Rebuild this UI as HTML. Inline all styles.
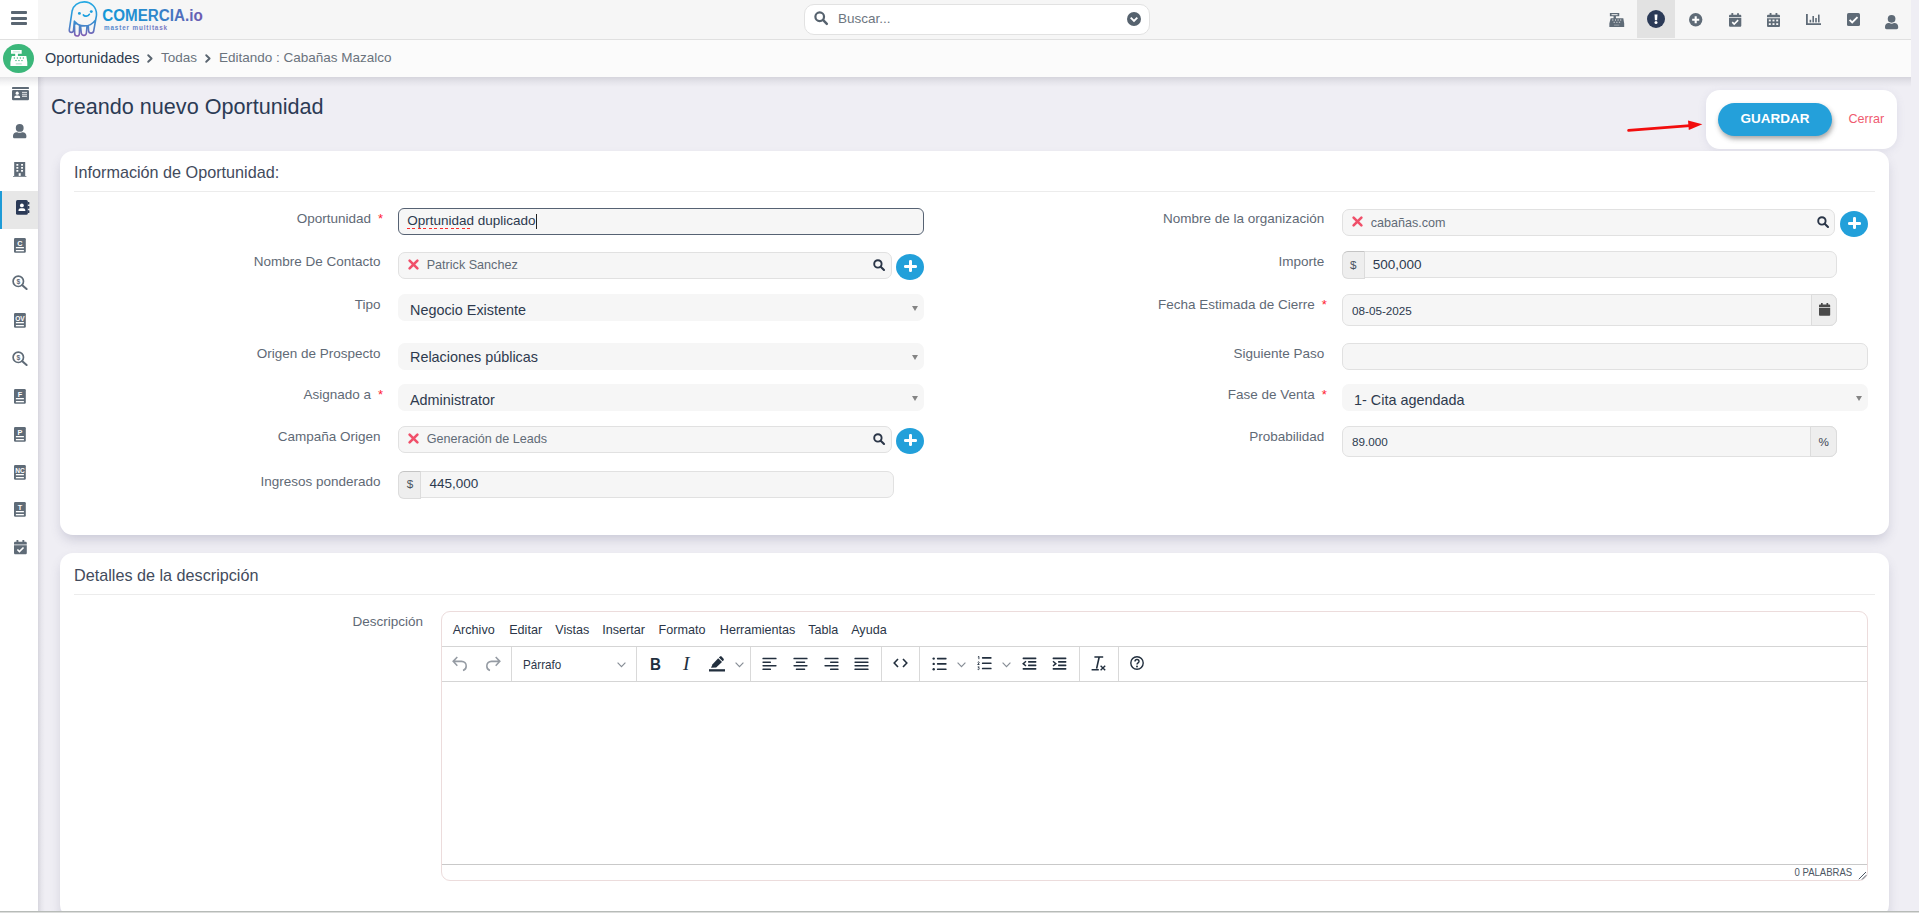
<!DOCTYPE html>
<html lang="es">
<head>
<meta charset="utf-8">
<title>Oportunidades - Editando</title>
<style>
*{box-sizing:border-box;margin:0;padding:0}
html,body{width:1919px;height:913px;overflow:hidden}
body{position:relative;background:#efeef4;font-family:"Liberation Sans",sans-serif;color:#2c3a4f;font-size:13.5px}
.abs{position:absolute}
svg{display:block;overflow:visible;position:absolute}
#topbar{position:absolute;left:0;top:0;width:1911px;height:40px;background:#f6f6f6;border-bottom:1px solid #e0e0e0}
#burger{position:absolute;left:0;top:0;width:38px;height:39px;background:#fff}
#crumbbar{position:absolute;left:0;top:40px;width:1911px;height:37px;background:#fbfbfb}
#crumbsh{position:absolute;left:0;top:77px;width:1911px;height:10px;background:linear-gradient(to bottom,rgba(40,40,60,.13),rgba(40,40,60,.05) 50%,rgba(40,40,60,0))}
#sidebar{position:absolute;left:0;top:77px;width:38px;height:836px;background:#fff}
#sidesh{position:absolute;left:38px;top:77px;width:7px;height:836px;background:linear-gradient(to right,rgba(40,40,60,.12),rgba(40,40,60,.04) 50%,rgba(40,40,60,0))}
.t{position:absolute;white-space:nowrap;line-height:1}
.lbl{position:absolute;white-space:nowrap;line-height:16px;font-size:13.5px;color:#5f6a76;text-align:right}
.req{color:#f23;margin-left:7px;font-size:13px}
.card{position:absolute;background:#fff;border-radius:13px;box-shadow:0 6px 12px -2px rgba(80,80,115,.24)}
.inp{position:absolute;background:#f6f6f6;border:1px solid #e1e1e1;border-radius:7px}
.inp .v{position:absolute;white-space:nowrap;line-height:1}
.sel{position:absolute;background:#f6f6f6;border-radius:7px}
.sel span{position:absolute;left:12px;top:7.5px;font-size:14.4px;line-height:17px;color:#2e3a4e;white-space:nowrap}
.sel i{position:absolute;right:6px;top:12px;width:0;height:0;border-left:3px solid transparent;border-right:3px solid transparent;border-top:5px solid #848484}
.plus{position:absolute;width:28px;height:26px;border-radius:50%;background:#22a0da}
.plus:before{content:"";position:absolute;left:7.5px;top:10.6px;width:13px;height:3px;background:#fff;border-radius:1.2px}
.plus:after{content:"";position:absolute;left:12.5px;top:6px;width:3px;height:12.2px;background:#fff;border-radius:1.2px}
.hr{position:absolute;height:1px;background:#ececec}
.addon{position:absolute;background:#eee;border:1px solid #dcdcdc}
.mi{position:absolute;top:623px;font-size:12.6px;line-height:14px;color:#2b3648;white-space:nowrap}
.vsep{position:absolute;top:647px;width:1px;height:34px;background:#d9d9d9}
</style>
</head>
<body>
<!-- main content -->
<div class="t" style="left:51px;top:96px;font-size:21.6px;color:#2c3b55">Creando nuevo Oportunidad</div>
<div class="abs" style="left:1706px;top:90px;width:191px;height:59px;border-radius:14px;background:#fff;box-shadow:0 2px 8px rgba(110,110,160,.12)"></div>
<div class="abs" style="left:1718px;top:103px;width:114px;height:33px;border-radius:17px;background:#24a0da;box-shadow:1px 3px 5px rgba(60,60,60,.45)"></div>
<div class="t" style="left:1718px;top:112px;width:114px;text-align:center;font-size:13.5px;font-weight:700;color:#fff">GUARDAR</div>
<div class="t" style="left:1848.5px;top:112.5px;font-size:12.6px;color:#ef5b70">Cerrar</div>
<svg style="left:1620px;top:115px" width="90" height="22" viewBox="0 0 90 22"><path d="M8.5 15.4L70 10.6" stroke="#f20d0d" stroke-width="2.6" stroke-linecap="round"/><path d="M68 5.6L82.4 9.2L68.8 15Z" fill="#f20d0d"/></svg>
<div class="card" style="left:60px;top:151px;width:1829px;height:384px"></div>
<div class="t" style="left:74px;top:164px;font-size:16.2px;color:#434b5c">Información de Oportunidad:</div>
<div class="hr" style="left:74px;top:191px;width:1801px"></div>
<div class="lbl" style="right:1536.0px;top:210.5px">Oportunidad<span class="req">*</span></div>
<div class="lbl" style="right:1538.5px;top:253.5px">Nombre De Contacto</div>
<div class="lbl" style="right:1538.5px;top:296.5px">Tipo</div>
<div class="lbl" style="right:1538.5px;top:345.5px">Origen de Prospecto</div>
<div class="lbl" style="right:1536.0px;top:386.5px">Asignado a<span class="req">*</span></div>
<div class="lbl" style="right:1538.5px;top:428.5px">Campaña Origen</div>
<div class="lbl" style="right:1538.5px;top:473.5px">Ingresos ponderado</div>
<div class="lbl" style="right:594.7px;top:210.5px">Nombre de la organización</div>
<div class="lbl" style="right:594.7px;top:253.5px">Importe</div>
<div class="lbl" style="right:592.2px;top:296.5px">Fecha Estimada de Cierre<span class="req">*</span></div>
<div class="lbl" style="right:594.7px;top:345.5px">Siguiente Paso</div>
<div class="lbl" style="right:592.2px;top:386.5px">Fase de Venta<span class="req">*</span></div>
<div class="lbl" style="right:594.7px;top:428.5px">Probabilidad</div>
<div class="inp" style="left:398px;top:208px;width:526px;height:27px;border-color:#566273;border-radius:6px"><span class="v" style="left:8.2px;top:5.4px;font-size:13.5px;color:#2c3a4f">Oprtunidad duplicado</span><div class="abs" style="left:8px;top:18.9px;width:66px;height:1.2px;background:repeating-linear-gradient(90deg,#ff2a2a 0,#ff2a2a 3px,transparent 3px,transparent 5.5px)"></div><div class="abs" style="left:136.6px;top:5px;width:1px;height:15px;background:#222"></div></div>
<div class="inp" style="left:398px;top:252px;width:493.5px;height:27px"><span class="v" style="left:27.7px;top:6px;font-size:12.6px;color:#616b77">Patrick Sanchez</span></div><svg style="left:407.7px;top:259px" width="11" height="11" viewBox="0 0 11 11"><path d="M1.6 1.6L9.4 9.4M9.4 1.6L1.6 9.4" stroke="#f0506a" stroke-width="2.6" stroke-linecap="round"/></svg><svg style="left:872.9px;top:258.8px" width="12" height="12" viewBox="0 0 12 12"><circle cx="4.9" cy="4.9" r="3.7" fill="none" stroke="#2b3648" stroke-width="1.9"/><path d="M7.7 7.7L11 11" stroke="#2b3648" stroke-width="2.1" stroke-linecap="round"/></svg>
<div class="plus" style="left:896px;top:254px"></div>
<div class="sel" style="left:398px;top:294px;width:526px;height:27px"><span style="top:7.5px">Negocio Existente</span><i></i></div>
<div class="sel" style="left:398px;top:343px;width:526px;height:27px"><span style="top:6.4px">Relaciones públicas</span><i></i></div>
<div class="sel" style="left:398px;top:384px;width:526px;height:27px"><span style="top:7.5px">Administrator</span><i></i></div>
<div class="inp" style="left:398px;top:426px;width:493.5px;height:27px"><span class="v" style="left:27.7px;top:6px;font-size:12.6px;color:#616b77">Generación de Leads</span></div><svg style="left:407.7px;top:433px" width="11" height="11" viewBox="0 0 11 11"><path d="M1.6 1.6L9.4 9.4M9.4 1.6L1.6 9.4" stroke="#f0506a" stroke-width="2.6" stroke-linecap="round"/></svg><svg style="left:872.9px;top:432.8px" width="12" height="12" viewBox="0 0 12 12"><circle cx="4.9" cy="4.9" r="3.7" fill="none" stroke="#2b3648" stroke-width="1.9"/><path d="M7.7 7.7L11 11" stroke="#2b3648" stroke-width="2.1" stroke-linecap="round"/></svg>
<div class="plus" style="left:896px;top:428px"></div>
<div class="inp" style="left:398px;top:471px;width:495.5px;height:26.9px"><span class="v" style="left:30.5px;top:4.8px;font-size:13.5px;color:#2c3a4f">445,000</span></div><div class="addon" style="left:398px;top:471px;width:22.5px;height:27.5px;border-radius:6px 0 0 6px;border-top-color:#c4c4c4"><span class="t" style="left:7.7px;top:5.8px;font-size:11.7px;color:#4a5360">$</span></div>
<div class="inp" style="left:1342px;top:209px;width:493.2px;height:27px"><span class="v" style="left:27.7px;top:6.8px;font-size:12.6px;color:#616b77">cabañas.com</span></div><svg style="left:1351.7px;top:216px" width="11" height="11" viewBox="0 0 11 11"><path d="M1.6 1.6L9.4 9.4M9.4 1.6L1.6 9.4" stroke="#f0506a" stroke-width="2.6" stroke-linecap="round"/></svg><svg style="left:1816.6000000000001px;top:215.8px" width="12" height="12" viewBox="0 0 12 12"><circle cx="4.9" cy="4.9" r="3.7" fill="none" stroke="#2b3648" stroke-width="1.9"/><path d="M7.7 7.7L11 11" stroke="#2b3648" stroke-width="2.1" stroke-linecap="round"/></svg>
<div class="plus" style="left:1840px;top:211px"></div>
<div class="inp" style="left:1342px;top:251px;width:495px;height:26.9px"><span class="v" style="left:29.7px;top:5.8px;font-size:13.5px;color:#2c3a4f">500,000</span></div><div class="addon" style="left:1342px;top:251px;width:22.5px;height:27.5px;border-radius:6px 0 0 6px;border-top-color:#c4c4c4"><span class="t" style="left:6.9px;top:6.8px;font-size:11.7px;color:#4a5360">$</span></div>
<div class="inp" style="left:1342px;top:294px;width:495px;height:32px"><span class="v" style="left:9px;top:9.5px;font-size:11.7px;color:#2c3a4f">08-05-2025</span></div>
<div class="addon" style="left:1811px;top:294px;width:26px;height:32px;border-radius:0 7px 7px 0"></div>
<svg style="left:1818.8px;top:303px" width="11.2" height="12.8" viewBox="0 0 11.2 12.8"><rect x="2" y="0" width="1.7" height="2.6" fill="#4a4a4a"/><rect x="7.5" y="0" width="1.7" height="2.6" fill="#4a4a4a"/><path d="M0 2.7C0 2 .5 1.6 1.1 1.6H10.1C10.7 1.6 11.2 2 11.2 2.7V3.9H0Z" fill="#4a4a4a"/><path d="M0 4.7H11.2V11.7C11.2 12.3 10.7 12.8 10.1 12.8H1.1C.5 12.8 0 12.3 0 11.7Z" fill="#4a4a4a"/></svg>
<div class="inp" style="left:1342px;top:343px;width:526px;height:27px"></div>
<div class="sel" style="left:1342px;top:384px;width:526px;height:27px"><span style="top:7.5px">1- Cita agendada</span><i></i></div>
<div class="inp" style="left:1342px;top:426px;width:495px;height:31px"><span class="v" style="left:9px;top:9px;font-size:11.7px;color:#2c3a4f">89.000</span></div>
<div class="addon" style="left:1810px;top:426px;width:27px;height:31px;border-radius:0 7px 7px 0"><span class="t" style="left:7.5px;top:8.5px;font-size:11.7px;color:#3d4654">%</span></div>
<div class="card" style="left:60px;top:553px;width:1829px;height:365px"></div>
<div class="t" style="left:74px;top:567px;font-size:16.2px;color:#434b5c">Detalles de la descripción</div>
<div class="hr" style="left:74px;top:594px;width:1801px"></div>
<div class="lbl" style="right:1496px;top:613.5px">Descripción</div>
<div class="abs" style="left:441px;top:611px;width:1427px;height:270px;border:1px solid #ecdcdc;border-radius:9px;background:#fff"></div>
<div class="abs" style="left:442px;top:646px;width:1425px;height:1px;background:#d5d5d5"></div>
<div class="abs" style="left:442px;top:681px;width:1425px;height:1px;background:#d5d5d5"></div>
<div class="abs" style="left:442px;top:864px;width:1425px;height:1px;background:#c9c9c9"></div>
<div class="mi" style="left:452.7px">Archivo</div>
<div class="mi" style="left:509.2px">Editar</div>
<div class="mi" style="left:555.3px">Vistas</div>
<div class="mi" style="left:602.2px">Insertar</div>
<div class="mi" style="left:658.5px">Formato</div>
<div class="mi" style="left:719.8px">Herramientas</div>
<div class="mi" style="left:808.2px">Tabla</div>
<div class="mi" style="left:851.2px">Ayuda</div>
<div class="vsep" style="left:511px"></div>
<div class="vsep" style="left:636px"></div>
<div class="vsep" style="left:750px"></div>
<div class="vsep" style="left:881px"></div>
<div class="vsep" style="left:919px"></div>
<div class="vsep" style="left:1079px"></div>
<div class="vsep" style="left:1118px"></div>
<div class="t" style="right:67px;top:867.3px;font-size:10.8px;color:#4c5663;transform:scaleX(.885);transform-origin:100% 0">0 PALABRAS</div>
<svg style="left:1858px;top:871px" width="9" height="9" viewBox="0 0 9 9"><path d="M.8 8.2L8 1M4 8.5L8.3 4.2" stroke="#4c5663" stroke-width="1" fill="none"/></svg>
<div class="t" style="left:523px;top:659.3px;font-size:12.6px;color:#2b3648;transform:scaleX(.925);transform-origin:0 0">Párrafo</div>
<svg style="left:617.0px;top:661.7px" width="9" height="5.6" viewBox="0 0 9 5.6"><path d="M.6 .6L4.5 4.6L8.4 .6" fill="none" stroke="#222f3e" stroke-width="1.15" opacity=".55"/></svg>
<svg style="left:451.8px;top:655.6px" width="15" height="15" viewBox="0 0 15 14" preserveAspectRatio="none"><path d="M5.3 .9L1.2 5L5.3 9.1M1.4 5H9.5C12.3 5 14.2 6.9 14.2 9.3C14.2 11.4 13 13 11 13.6" fill="none" stroke="#959ba3" stroke-width="1.55"/></svg>
<svg style="left:485.5px;top:655.6px" width="15" height="15" viewBox="0 0 15 14" preserveAspectRatio="none"><path d="M9.7 .9L13.8 5L9.7 9.1M13.6 5H5.5C2.7 5 .8 6.9 .8 9.3C.8 11.4 2 13 4 13.6" fill="none" stroke="#959ba3" stroke-width="1.55"/></svg>
<div class="t" style="left:650.2px;top:656.2px;font-size:16.3px;font-weight:700;color:#222f3e;transform:scaleX(.93);transform-origin:0 0">B</div>
<div class="t" style="left:683px;top:653.6px;font-size:19.4px;font-style:italic;font-family:'Liberation Serif',serif;color:#222f3e">I</div>
<svg style="left:709px;top:656px" width="16" height="16" viewBox="0 0 16 16"><path d="M2 11.8L3.6 8.3L9.2 2.3L13 6L7.2 11.6Z" fill="#222f3e"/><path d="M9.9 1.6L10.7 .8C11.3 .2 12.2 .2 12.8 .8L14.4 2.4C15 3 15 3.9 14.4 4.5L13.7 5.3Z" fill="#222f3e"/><rect x="0" y="13.2" width="16" height="2.3" fill="#222f3e"/></svg>
<svg style="left:734.7px;top:661.7px" width="9" height="5.6" viewBox="0 0 9 5.6"><path d="M.6 .6L4.5 4.6L8.4 .6" fill="none" stroke="#222f3e" stroke-width="1.15" opacity=".55"/></svg>
<svg style="left:762.1px;top:656.9px" width="15" height="13" viewBox="0 0 15 13"><rect x="0.4" y="0.85" width="14.2" height="1.5" rx=".6" fill="#222f3e"/><rect x="0.4" y="4.4" width="8.6" height="1.5" rx=".6" fill="#222f3e"/><rect x="0.4" y="7.95" width="14.2" height="1.5" rx=".6" fill="#222f3e"/><rect x="0.4" y="11.5" width="8.6" height="1.5" rx=".6" fill="#222f3e"/></svg>
<svg style="left:793.0px;top:656.9px" width="15" height="13" viewBox="0 0 15 13"><rect x="0.4" y="0.85" width="14.2" height="1.5" rx=".6" fill="#222f3e"/><rect x="2.8" y="4.4" width="9.4" height="1.5" rx=".6" fill="#222f3e"/><rect x="0.4" y="7.95" width="14.2" height="1.5" rx=".6" fill="#222f3e"/><rect x="2.8" y="11.5" width="9.4" height="1.5" rx=".6" fill="#222f3e"/></svg>
<svg style="left:823.5px;top:656.9px" width="15" height="13" viewBox="0 0 15 13"><rect x="0.4" y="0.85" width="14.2" height="1.5" rx=".6" fill="#222f3e"/><rect x="6" y="4.4" width="8.6" height="1.5" rx=".6" fill="#222f3e"/><rect x="0.4" y="7.95" width="14.2" height="1.5" rx=".6" fill="#222f3e"/><rect x="6" y="11.5" width="8.6" height="1.5" rx=".6" fill="#222f3e"/></svg>
<svg style="left:853.9px;top:656.9px" width="15" height="13" viewBox="0 0 15 13"><rect x="0.4" y="0.85" width="14.2" height="1.5" rx=".6" fill="#222f3e"/><rect x="0.4" y="4.4" width="14.2" height="1.5" rx=".6" fill="#222f3e"/><rect x="0.4" y="7.95" width="14.2" height="1.5" rx=".6" fill="#222f3e"/><rect x="0.4" y="11.5" width="14.2" height="1.5" rx=".6" fill="#222f3e"/></svg>
<svg style="left:892.5px;top:658.3px" width="15" height="10" viewBox="0 0 15 10"><path d="M5 1L1.2 5L5 9M10 1L13.8 5L10 9" fill="none" stroke="#222f3e" stroke-width="1.6"/></svg>
<svg style="left:932px;top:656.5px" width="15" height="14" viewBox="0 0 15 14"><circle cx="1.7" cy="1.6" r="1.2" fill="#222f3e"/><circle cx="1.7" cy="6.9" r="1.2" fill="#222f3e"/><circle cx="1.7" cy="12.2" r="1.2" fill="#222f3e"/><rect x="4.9" y=".8" width="9.7" height="1.6" rx=".6" fill="#222f3e"/><rect x="4.9" y="6.1" width="9.7" height="1.6" rx=".6" fill="#222f3e"/><rect x="4.9" y="11.4" width="9.7" height="1.6" rx=".6" fill="#222f3e"/></svg>
<svg style="left:956.7px;top:661.7px" width="9" height="5.6" viewBox="0 0 9 5.6"><path d="M.6 .6L4.5 4.6L8.4 .6" fill="none" stroke="#222f3e" stroke-width="1.15" opacity=".55"/></svg>
<svg style="left:977px;top:656.2px" width="15" height="15" viewBox="0 0 15 15"><path d="M.9 1L1.9 .4V3.2M.7 6.3C1.2 5.6 2.4 5.8 2.2 6.8L.7 8.5H2.5M.7 10.9H2.2L1.5 12C2.5 12 2.6 13.5 1.5 13.6C1.1 13.6 .8 13.5 .6 13.3" fill="none" stroke="#222f3e" stroke-width=".9"/><rect x="4.9" y="1.1" width="9.7" height="1.6" rx=".6" fill="#222f3e"/><rect x="4.9" y="6.4" width="9.7" height="1.6" rx=".6" fill="#222f3e"/><rect x="4.9" y="11.7" width="9.7" height="1.6" rx=".6" fill="#222f3e"/></svg>
<svg style="left:1002.0px;top:661.7px" width="9" height="5.6" viewBox="0 0 9 5.6"><path d="M.6 .6L4.5 4.6L8.4 .6" fill="none" stroke="#222f3e" stroke-width="1.15" opacity=".55"/></svg>
<svg style="left:1022px;top:656.8px" width="15" height="13" viewBox="0 0 15 13"><rect x=".6" y=".6" width="13.8" height="1.6" rx=".6" fill="#222f3e"/><rect x="6" y="4.1" width="8.4" height="1.6" rx=".6" fill="#222f3e"/><rect x="6" y="7.6" width="8.4" height="1.6" rx=".6" fill="#222f3e"/><rect x=".6" y="11.1" width="13.8" height="1.6" rx=".6" fill="#222f3e"/><path d="M4 4.3L1.2 6.65L4 9" fill="none" stroke="#222f3e" stroke-width="1.5"/></svg>
<svg style="left:1052px;top:656.8px" width="15" height="13" viewBox="0 0 15 13"><rect x=".6" y=".6" width="13.8" height="1.6" rx=".6" fill="#222f3e"/><rect x="6" y="4.1" width="8.4" height="1.6" rx=".6" fill="#222f3e"/><rect x="6" y="7.6" width="8.4" height="1.6" rx=".6" fill="#222f3e"/><rect x=".6" y="11.1" width="13.8" height="1.6" rx=".6" fill="#222f3e"/><path d="M1 4.3L3.8 6.65L1 9" fill="none" stroke="#222f3e" stroke-width="1.5"/></svg>
<svg style="left:1091px;top:656px" width="16" height="15" viewBox="0 0 16 15"><path d="M3.4 1H12.2M8.2 1L5.6 12.6" fill="none" stroke="#222f3e" stroke-width="1.6"/><rect x=".6" y="13" width="7.2" height="1.5" fill="#222f3e"/><path d="M9.6 9.8L14.2 14.2M14.2 9.8L9.6 14.2" stroke="#222f3e" stroke-width="1.4"/></svg>
<svg style="left:1128.9px;top:655.1px" width="16" height="16" viewBox="0 0 16 16"><circle cx="8" cy="8" r="6.2" fill="none" stroke="#222f3e" stroke-width="1.4"/><path d="M6 6.4C6 3.9 10 3.9 10 6.4C10 7.9 8 7.8 8 9.5" fill="none" stroke="#222f3e" stroke-width="1.4"/><circle cx="8" cy="11.5" r=".95" fill="#222f3e"/></svg>
<!-- chrome: top bar, breadcrumb, sidebar -->
<div id="topbar"></div>
<div id="burger">
<div class="abs" style="left:11px;top:11px;width:16px;height:3px;border-radius:.9px;background:#5a6672"></div>
<div class="abs" style="left:11px;top:16.7px;width:16px;height:3px;border-radius:.9px;background:#5a6672"></div>
<div class="abs" style="left:11px;top:22.4px;width:16px;height:3px;border-radius:.9px;background:#5a6672"></div>
</div>
<svg style="left:62px;top:0px" width="50" height="40" viewBox="0 0 50 40">
<defs><linearGradient id="jg" gradientUnits="userSpaceOnUse" x1="0" y1="2" x2="0" y2="36"><stop offset="0" stop-color="#27aae3"/><stop offset=".5" stop-color="#2f93d6"/><stop offset=".78" stop-color="#4f7fc4"/><stop offset="1" stop-color="#8459b0"/></linearGradient>
<linearGradient id="tg" gradientUnits="userSpaceOnUse" x1="0" y1="0" x2="102" y2="0"><stop offset="0" stop-color="#1398d8"/><stop offset=".55" stop-color="#2f86cb"/><stop offset="1" stop-color="#6c5bb0"/></linearGradient><linearGradient id="sg" gradientUnits="userSpaceOnUse" x1="0" y1="0" x2="70" y2="0"><stop offset="0" stop-color="#4c8ad0"/><stop offset="1" stop-color="#7c74bf"/></linearGradient></defs>
<path d="M7.3 29.8 L10.1 11 C11.2 5.6 16.1 1.9 22.3 1.9 C29.3 1.9 34.6 7.3 34.5 14.4 C34.5 15.6 34.3 16.8 34 18 L31.7 31 C31.2 33.9 26.9 33.8 26.6 30.8 L26.3 25.9 M7.3 29.8 C7 32.9 11.1 33.3 11.5 30.3 L12.4 21.2 L12.7 33.6 C12.8 36.8 17.2 36.9 17.4 33.7 L17.6 25.6 M18.5 25.6 L19.3 33 C19.7 36.2 24.1 36.2 24.4 33 L25 26 M12.4 21.2 C14.5 24 18 25.9 22.3 25.9 C26.8 25.9 30.6 24 32.9 20.6 M12.6 21.5 L14.8 23.4 L13 24" fill="none" stroke="url(#jg)" stroke-width="1.6" stroke-linecap="round" stroke-linejoin="round"/>
<circle cx="17.4" cy="13.4" r="1.45" fill="#1d9fdf"/><circle cx="29.3" cy="11.6" r="1.45" fill="#1d9fdf"/>
<path d="M21.4 15 C22.6 16.8 26 16.6 27.3 14.3" fill="none" stroke="#1d9fdf" stroke-width="1.7" stroke-linecap="round"/>
</svg>
<svg style="left:100px;top:4px" width="110" height="30" viewBox="0 0 110 30">
<text x="2.2" y="16.6" font-family="Liberation Sans, sans-serif" font-weight="700" font-size="15.6" textLength="100.5" lengthAdjust="spacingAndGlyphs" fill="url(#tg)">COMERCIA.io</text>
<text x="4" y="26" font-family="Liberation Sans, sans-serif" font-weight="700" font-size="6.3" letter-spacing="0.87" fill="url(#sg)">master multitask</text>
</svg>
<div class="abs" style="left:804px;top:4px;width:346px;height:30.6px;background:#fff;border:1px solid #e2e2e2;border-radius:10px"></div>
<svg style="left:814px;top:11px" width="14" height="14" viewBox="0 0 12 12"><circle cx="4.9" cy="4.9" r="3.7" fill="none" stroke="#56626e" stroke-width="1.9"/><path d="M7.7 7.7L11 11" stroke="#56626e" stroke-width="2.1" stroke-linecap="round"/></svg>
<div class="t" style="left:838px;top:11.5px;font-size:13.5px;color:#6d7680">Buscar...</div>
<svg style="left:1127px;top:12px" width="14" height="14" viewBox="0 0 14 14"><circle cx="7" cy="7" r="7" fill="#56626e"/><path d="M3.7 5.6L7 8.9L10.3 5.6" fill="none" stroke="#fff" stroke-width="1.9"/></svg>
<svg style="left:1609px;top:13px" width="15.2" height="14.06" viewBox="0 0 17.3 16"><path d="M1 0H11.7V3.75H7.9V6H16.3L17.3 12V16H.4V12L1.9 6H5.2V3.75H1Z" fill="#5f6b77"/><rect x="2.9" y="1.2" width="6.9" height="1.3" fill="#f6f6f6" opacity="0.85"/><g fill="#f6f6f6" opacity=".8"><rect x="3.8" y="7.2" width="1.1" height="1.6"/><rect x="6.8" y="7.2" width="1.1" height="1.6"/><rect x="9.8" y="7.2" width="1.1" height="1.6"/><rect x="12.8" y="7.2" width="1.1" height="1.6"/><rect x="5.2" y="10" width="1.5" height="1.1"/><rect x="8.2" y="10" width="1.5" height="1.1"/><rect x="11.2" y="10" width="1.5" height="1.1"/></g><rect x="5.8" y="13.1" width="5.9" height="1.5" fill="#f6f6f6" opacity=".3"/></svg>
<div class="abs" style="left:1637px;top:0;width:38px;height:38px;background:#e2e2e2"></div>
<svg style="left:1647px;top:10.2px" width="18" height="18" viewBox="0 0 18 18"><circle cx="9" cy="9" r="9" fill="#2b3a57"/><path d="M7.5 4.6H10.5L10.1 10.2H7.9Z" fill="#fff"/><circle cx="9" cy="12.6" r="1.5" fill="#fff"/></svg>
<svg style="left:1688.7px;top:13px" width="13.4" height="13.4" viewBox="0 0 14 14"><circle cx="7" cy="7" r="7" fill="#5f6b77"/><path d="M7 3.3V10.7M3.3 7H10.7" stroke="#fff" stroke-width="2.2"/></svg>
<svg style="left:1728.7px;top:13px" width="12.3" height="13.78" viewBox="0 0 12.5 14"><rect x="2.4" y="0" width="1.9" height="3" rx=".5" fill="#5f6b77"/><rect x="8.2" y="0" width="1.9" height="3" rx=".5" fill="#5f6b77"/><path d="M0 2.9C0 2.2 .6 1.7 1.3 1.7H11.2C11.9 1.7 12.5 2.2 12.5 2.9V4.3H0Z" fill="#5f6b77"/><path d="M0 5.2H12.5V12.7C12.5 13.4 11.9 14 11.2 14H1.3C.6 14 0 13.4 0 12.7Z" fill="#5f6b77"/><path d="M3.3 9.3L5.3 11.3L9.3 7.3" fill="none" stroke="#fff" stroke-width="1.6"/></svg>
<svg style="left:1767px;top:13px" width="13" height="14" viewBox="0 0 13 14">
<rect x="2.6" y="0" width="1.9" height="3" rx=".5" fill="#5f6b77"/><rect x="8.5" y="0" width="1.9" height="3" rx=".5" fill="#5f6b77"/>
<path d="M0 2.9C0 2.2 .6 1.7 1.3 1.7H11.7C12.4 1.7 13 2.2 13 2.9V4.3H0Z" fill="#5f6b77"/>
<path d="M0 5.2H13V12.7C13 13.4 12.4 14 11.7 14H1.3C.6 14 0 13.4 0 12.7Z" fill="#5f6b77"/>
<g fill="#f6f6f6"><rect x="1.8" y="6.6" width="2" height="1.8"/><rect x="5.5" y="6.6" width="2" height="1.8"/><rect x="9.2" y="6.6" width="2" height="1.8"/><rect x="1.8" y="10.2" width="2" height="1.8"/><rect x="5.5" y="10.2" width="2" height="1.8"/><rect x="9.2" y="10.2" width="2" height="1.8"/></g></svg>
<svg style="left:1806px;top:14px" width="15" height="11" viewBox="0 0 15 11">
<path d="M.9 0V10.1H15" fill="none" stroke="#5f6b77" stroke-width="1.8"/>
<rect x="3.6" y="5.8" width="1.6" height="2.6" fill="#5f6b77"/><rect x="6.4" y="2" width="1.6" height="6.4" fill="#5f6b77"/><rect x="9.2" y="4" width="1.6" height="4.4" fill="#5f6b77"/><rect x="12" y=".6" width="1.6" height="7.8" fill="#5f6b77"/></svg>
<svg style="left:1846.5px;top:13.2px" width="13" height="13" viewBox="0 0 13 13"><rect width="13" height="13" rx="1.6" fill="#5f6b77"/><path d="M2.6 6.8L5.2 9.4L10.5 4.1" fill="none" stroke="#fff" stroke-width="1.9"/></svg>
<svg style="left:1885.3px;top:14.7px" width="13.2" height="14.14" viewBox="0 0 14 15"><circle cx="7" cy="4.1" r="4.1" fill="#5f6b77"/><path d="M0 13.2V12.4C0 10.2 1.7 8.6 3.9 8.6H4.5C5.3 9 6.1 9.2 7 9.2S8.7 9 9.5 8.6H10.1C12.3 8.6 14 10.2 14 12.4V13.2C14 14.2 13.3 15 12.3 15H1.7C0.7 15 0 14.2 0 13.2Z" fill="#5f6b77"/></svg>
<div id="crumbbar"></div>
<div class="abs" style="left:3px;top:43.8px;width:31.2px;height:29.2px;border-radius:50%;background:#3bb77a"></div>
<svg style="left:10.2px;top:50px" width="17.3" height="16.00" viewBox="0 0 17.3 16"><path d="M1 0H11.7V3.75H7.9V6H16.3L17.3 12V16H.4V12L1.9 6H5.2V3.75H1Z" fill="#fff"/><rect x="2.9" y="1.2" width="6.9" height="1.3" fill="#3bb77a" opacity="0.25"/><g fill="#3bb77a" opacity=".8"><rect x="3.8" y="7.2" width="1.1" height="1.6"/><rect x="6.8" y="7.2" width="1.1" height="1.6"/><rect x="9.8" y="7.2" width="1.1" height="1.6"/><rect x="12.8" y="7.2" width="1.1" height="1.6"/><rect x="5.2" y="10" width="1.5" height="1.1"/><rect x="8.2" y="10" width="1.5" height="1.1"/><rect x="11.2" y="10" width="1.5" height="1.1"/></g><rect x="5.8" y="13.1" width="5.9" height="1.5" fill="#3bb77a" opacity=".3"/></svg>
<div class="t" style="left:45px;top:51px;font-size:14.4px;color:#2c3a4f">Oportunidades</div>
<svg style="left:147px;top:53.5px" width="6" height="9" viewBox="0 0 6 9"><path d="M1.2 1.2L4.6 4.5L1.2 7.8" fill="none" stroke="#5a6570" stroke-width="1.9" stroke-linecap="round" stroke-linejoin="round"/></svg>
<div class="t" style="left:161px;top:50.5px;font-size:13.5px;color:#6a737d">Todas</div>
<svg style="left:205px;top:53.5px" width="6" height="9" viewBox="0 0 6 9"><path d="M1.2 1.2L4.6 4.5L1.2 7.8" fill="none" stroke="#5a6570" stroke-width="1.9" stroke-linecap="round" stroke-linejoin="round"/></svg>
<div class="t" style="left:219px;top:50.5px;font-size:13.5px;color:#6a737d">Editando : Cabañas Mazalco</div>
<div id="sidebar"></div><div id="sidesh"></div>
<svg style="left:11.6px;top:86.7px" width="17" height="13.3" viewBox="0 0 17 13.3">
<rect x="0" y="0" width="17" height="1.9" rx=".4" fill="#5f6b77"/><rect x="0" y="3" width="17" height="10.3" rx="1.2" fill="#5f6b77"/>
<circle cx="5.2" cy="6.2" r="1.6" fill="#fff"/><path d="M2.3 11V10.4C2.3 9.2 3.2 8.5 4.2 8.5H6.2C7.2 8.5 8.1 9.2 8.1 10.4V11Z" fill="#fff"/>
<rect x="10" y="4.9" width="5" height="1" fill="#fff" opacity=".8"/><rect x="10" y="6.8" width="5" height="1" fill="#fff" opacity=".8"/><rect x="10" y="8.7" width="5" height="1" fill="#fff"/></svg>
<svg style="left:13.3px;top:123.8px" width="13.4" height="14.36" viewBox="0 0 14 15"><circle cx="7" cy="4.1" r="4.1" fill="#5f6b77"/><path d="M0 13.2V12.4C0 10.2 1.7 8.6 3.9 8.6H4.5C5.3 9 6.1 9.2 7 9.2S8.7 9 9.5 8.6H10.1C12.3 8.6 14 10.2 14 12.4V13.2C14 14.2 13.3 15 12.3 15H1.7C0.7 15 0 14.2 0 13.2Z" fill="#5f6b77"/></svg>
<svg style="left:13.3px;top:162px" width="13.4" height="14.8" viewBox="0 0 13.4 14.8">
<path d="M1.2 0H12.2V13.9H13.4V14.8H0V13.9H1.2Z" fill="#5f6b77"/>
<g fill="#fff"><rect x="3.4" y="2" width="1.9" height="1.7"/><rect x="8.1" y="2" width="1.9" height="1.7"/><rect x="3.4" y="5" width="1.9" height="1.7"/><rect x="8.1" y="5" width="1.9" height="1.7"/><rect x="3.4" y="8" width="1.9" height="1.7"/><rect x="8.1" y="8" width="1.9" height="1.7"/><rect x="5.7" y="11.2" width="2" height="2.7"/></g></svg>
<div class="abs" style="left:0;top:191px;width:38px;height:38px;background:#e7e7e7"></div><div class="abs" style="left:0;top:191px;width:2px;height:38px;background:#1e9bd7"></div>
<svg style="left:16px;top:199.9px" width="13.4" height="14.8" viewBox="0 0 13.4 14.8">
<rect x="0" y="0" width="11.8" height="14.8" rx="1.5" fill="#2b3a57"/>
<rect x="11.6" y="1.9" width="1.8" height="2.6" rx=".5" fill="#2b3a57"/><rect x="11.6" y="6.1" width="1.8" height="2.6" rx=".5" fill="#2b3a57"/><rect x="11.6" y="10.3" width="1.8" height="2.6" rx=".5" fill="#2b3a57"/>
<circle cx="5.9" cy="5.4" r="1.9" fill="#fff"/><path d="M2.5 11V10.3C2.5 9 3.5 8.2 4.6 8.2H7.2C8.3 8.2 9.3 9 9.3 10.3V11Z" fill="#fff"/></svg>
<svg style="left:14.1px;top:238.1px" width="11.8" height="14.8" viewBox="0 0 11.8 14.8"><rect x="0" y="0" width="11.8" height="14.8" rx="1.2" fill="#5f6b77"/><text x="5.9" y="7.9" font-family="Liberation Sans, sans-serif" font-weight="700" font-size="7.3" text-anchor="middle" fill="#fff">C</text><rect x="1.9" y="9" width="8" height="1.3" fill="#fff"/><rect x="1.9" y="12" width="8" height="1.3" fill="#fff"/></svg>
<svg style="left:12.2px;top:275.2px" width="15.6" height="15" viewBox="0 0 15.6 15"><circle cx="6.3" cy="6.3" r="5.2" fill="none" stroke="#5f6b77" stroke-width="1.7"/><path d="M10.3 10.3L14.6 14" stroke="#5f6b77" stroke-width="2.1" stroke-linecap="round"/><text x="6.3" y="8.7" font-family="Liberation Sans, sans-serif" font-weight="700" font-size="6.8" text-anchor="middle" fill="#5f6b77">$</text></svg>
<svg style="left:14.1px;top:313.20000000000005px" width="11.8" height="14.8" viewBox="0 0 11.8 14.8"><rect x="0" y="0" width="11.8" height="14.8" rx="1.2" fill="#5f6b77"/><text x="5.9" y="7.9" font-family="Liberation Sans, sans-serif" font-weight="700" font-size="7.3" text-anchor="middle" textLength="9.5" lengthAdjust="spacingAndGlyphs" fill="#fff">OV</text><rect x="1.9" y="9" width="8" height="1.3" fill="#fff"/><rect x="1.9" y="12" width="8" height="1.3" fill="#fff"/></svg>
<svg style="left:12.2px;top:351px" width="15.6" height="15" viewBox="0 0 15.6 15"><circle cx="6.3" cy="6.3" r="5.2" fill="none" stroke="#5f6b77" stroke-width="1.7"/><path d="M10.3 10.3L14.6 14" stroke="#5f6b77" stroke-width="2.1" stroke-linecap="round"/><text x="6.3" y="8.7" font-family="Liberation Sans, sans-serif" font-weight="700" font-size="6.8" text-anchor="middle" fill="#5f6b77">$</text></svg>
<svg style="left:14.1px;top:388.8px" width="11.8" height="14.8" viewBox="0 0 11.8 14.8"><rect x="0" y="0" width="11.8" height="14.8" rx="1.2" fill="#5f6b77"/><text x="5.9" y="7.9" font-family="Liberation Sans, sans-serif" font-weight="700" font-size="7.3" text-anchor="middle" fill="#fff">F</text><rect x="1.9" y="9" width="8" height="1.3" fill="#fff"/><rect x="1.9" y="12" width="8" height="1.3" fill="#fff"/></svg>
<svg style="left:14.1px;top:426.90000000000003px" width="11.8" height="14.8" viewBox="0 0 11.8 14.8"><rect x="0" y="0" width="11.8" height="14.8" rx="1.2" fill="#5f6b77"/><text x="5.9" y="7.9" font-family="Liberation Sans, sans-serif" font-weight="700" font-size="7.3" text-anchor="middle" fill="#fff">P</text><rect x="1.9" y="9" width="8" height="1.3" fill="#fff"/><rect x="1.9" y="12" width="8" height="1.3" fill="#fff"/></svg>
<svg style="left:14.1px;top:464.6px" width="11.8" height="14.8" viewBox="0 0 11.8 14.8"><rect x="0" y="0" width="11.8" height="14.8" rx="1.2" fill="#5f6b77"/><text x="5.9" y="7.9" font-family="Liberation Sans, sans-serif" font-weight="700" font-size="7.3" text-anchor="middle" textLength="9.5" lengthAdjust="spacingAndGlyphs" fill="#fff">NC</text><rect x="1.9" y="9" width="8" height="1.3" fill="#fff"/><rect x="1.9" y="12" width="8" height="1.3" fill="#fff"/></svg>
<svg style="left:14.1px;top:502.1px" width="11.8" height="14.8" viewBox="0 0 11.8 14.8"><rect x="0" y="0" width="11.8" height="14.8" rx="1.2" fill="#5f6b77"/><text x="5.9" y="7.9" font-family="Liberation Sans, sans-serif" font-weight="700" font-size="7.3" text-anchor="middle" fill="#fff">T</text><rect x="1.9" y="9" width="8" height="1.3" fill="#fff"/><rect x="1.9" y="12" width="8" height="1.3" fill="#fff"/></svg>
<svg style="left:13.9px;top:539.6px" width="12.8" height="14.34" viewBox="0 0 12.5 14"><rect x="2.4" y="0" width="1.9" height="3" rx=".5" fill="#5f6b77"/><rect x="8.2" y="0" width="1.9" height="3" rx=".5" fill="#5f6b77"/><path d="M0 2.9C0 2.2 .6 1.7 1.3 1.7H11.2C11.9 1.7 12.5 2.2 12.5 2.9V4.3H0Z" fill="#5f6b77"/><path d="M0 5.2H12.5V12.7C12.5 13.4 11.9 14 11.2 14H1.3C.6 14 0 13.4 0 12.7Z" fill="#5f6b77"/><path d="M3.3 9.3L5.3 11.3L9.3 7.3" fill="none" stroke="#fff" stroke-width="1.6"/></svg>
<div id="crumbsh"></div>
<div class="abs" style="left:0;top:911px;width:1919px;height:1px;background:#b7bbb8"></div><div class="abs" style="left:0;top:912px;width:1919px;height:1px;background:#dcdddc"></div>
</body>
</html>
